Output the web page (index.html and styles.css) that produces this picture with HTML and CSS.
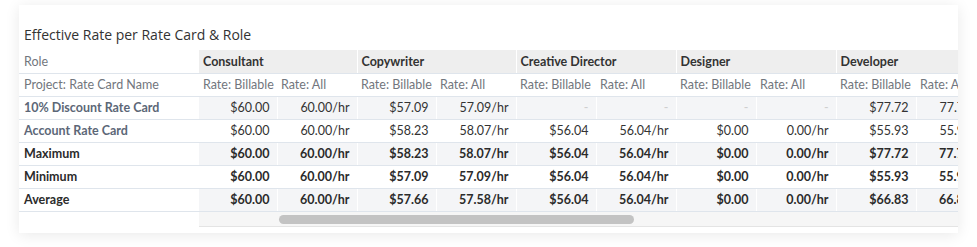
FILE: index.html
```html
<!DOCTYPE html>
<html>
<head>
<meta charset="utf-8">
<link rel="stylesheet" href="styles.css">
</head>
<body>
<div class="page">
  <section class="card">
    <h2 class="title">Effective Rate per Rate Card &amp; Role</h2>
    <div class="viewport">
      <table class="grid">
        <colgroup>
          <col class="c-label">
          <col class="c-78"><col class="c-80">
          <col class="c-79"><col class="c-80">
          <col class="c-80"><col class="c-80">
          <col class="c-80"><col class="c-80">
          <col class="c-80"><col class="c-80">
        </colgroup>
        <tr class="r-group">
          <td class="lbl muted">Role</td>
          <td class="grp" colspan="2">Consultant</td>
          <td class="grp" colspan="2">Copywriter</td>
          <td class="grp" colspan="2">Creative Director</td>
          <td class="grp" colspan="2">Designer</td>
          <td class="grp" colspan="2">Developer</td>
        </tr>
        <tr class="r-sub">
          <td class="lbl muted">Project: Rate Card Name</td>
          <td class="sub">Rate: Billable</td><td class="sub">Rate: All</td>
          <td class="sub">Rate: Billable</td><td class="sub">Rate: All</td>
          <td class="sub">Rate: Billable</td><td class="sub">Rate: All</td>
          <td class="sub">Rate: Billable</td><td class="sub">Rate: All</td>
          <td class="sub">Rate: Billable</td><td class="sub">Rate: All</td>
        </tr>
        <tr class="r-data shade">
          <td class="lbl card-name">10% Discount Rate Card</td>
          <td class="num">$60.00</td><td class="num">60.00/hr</td>
          <td class="num">$57.09</td><td class="num">57.09/hr</td>
          <td class="num dash">-</td><td class="num dash">-</td>
          <td class="num dash">-</td><td class="num dash">-</td>
          <td class="num">$77.72</td><td class="num">77.72/hr</td>
        </tr>
        <tr class="r-data">
          <td class="lbl card-name">Account Rate Card</td>
          <td class="num">$60.00</td><td class="num">60.00/hr</td>
          <td class="num">$58.23</td><td class="num">58.07/hr</td>
          <td class="num">$56.04</td><td class="num">56.04/hr</td>
          <td class="num">$0.00</td><td class="num">0.00/hr</td>
          <td class="num">$55.93</td><td class="num">55.93/hr</td>
        </tr>
        <tr class="r-data shade total">
          <td class="lbl">Maximum</td>
          <td class="num">$60.00</td><td class="num">60.00/hr</td>
          <td class="num">$58.23</td><td class="num">58.07/hr</td>
          <td class="num">$56.04</td><td class="num">56.04/hr</td>
          <td class="num">$0.00</td><td class="num">0.00/hr</td>
          <td class="num">$77.72</td><td class="num">77.72/hr</td>
        </tr>
        <tr class="r-data total">
          <td class="lbl">Minimum</td>
          <td class="num">$60.00</td><td class="num">60.00/hr</td>
          <td class="num">$57.09</td><td class="num">57.09/hr</td>
          <td class="num">$56.04</td><td class="num">56.04/hr</td>
          <td class="num">$0.00</td><td class="num">0.00/hr</td>
          <td class="num">$55.93</td><td class="num">55.93/hr</td>
        </tr>
        <tr class="r-data shade total">
          <td class="lbl">Average</td>
          <td class="num">$60.00</td><td class="num">60.00/hr</td>
          <td class="num">$57.66</td><td class="num">57.58/hr</td>
          <td class="num">$56.04</td><td class="num">56.04/hr</td>
          <td class="num">$0.00</td><td class="num">0.00/hr</td>
          <td class="num">$66.83</td><td class="num">66.83/hr</td>
        </tr>
      </table>
    </div>
    <div class="scrollbar">
      <div class="track"><div class="thumb"></div></div>
    </div>
  </section>
</div>
</body>
</html>
```
FILE: styles.css
```css
* { box-sizing: border-box; }
html, body { margin: 0; padding: 0; }
body {
  background: #ffffff;
  font-family: Lato, "Open Sans", sans-serif;
  width: 977px;
  height: 247px;
  overflow: hidden;
}
.page {
  padding: 5px 19px 0 19px;
}
.card {
  background: #ffffff;
  height: 228px;
  box-shadow: 0 2px 14px rgba(0, 0, 0, 0.09);
  display: flex;
  flex-direction: column;
  overflow: hidden;
}
.title {
  margin: 0;
  padding: 20px 0 0 5px;
  height: 45px;
  flex: none;
  font-family: "Open Sans", sans-serif;
  font-weight: 400;
  font-size: 14px;
  line-height: 20px;
  color: #333;
}
.viewport {
  overflow: hidden;
  width: 939px;
}
.grid {
  border-collapse: collapse;
  table-layout: fixed;
  width: 977px;
  font-size: 12.5px;
}
.c-label { width: 180px; }
.c-78 { width: 78px; }
.c-79 { width: 79px; }
.c-80 { width: 80px; }
.grid td {
  height: 23px;
  padding: 0 6px 0 4px;
  white-space: nowrap;
  overflow: hidden;
  border-bottom: 1px solid #dfe5ec;
  color: #333;
}
.grid td.lbl { padding-left: 5px; }
.muted { color: #72767d !important; }
.grp {
  background: #eeeeee;
  font-weight: 700;
  color: #2f2f2f;
  border-right: 1px solid #ffffff;
}
.sub { color: #72767d !important; }
.card-name { font-weight: 700; color: #5c6777 !important; }
.total td { font-weight: 700; color: #2b2b2b; }
.num {
  text-align: right;
  border-right: 1px solid #ffffff;
  padding-right: 7px !important;
}
.shade .num { background: #f4f5f7; }
.num.dash { color: #cfcfcf !important; font-weight: 400; }
.scrollbar {
  padding-left: 180px;
}
.track {
  height: 15px;
  background: #f6f6f6;
  border-bottom: 1px solid #e4e4e4;
  padding: 3px 0 0 80px;
}
.thumb {
  width: 355px;
  height: 9px;
  border-radius: 5px;
  background: #c3c3c3;
}
```
